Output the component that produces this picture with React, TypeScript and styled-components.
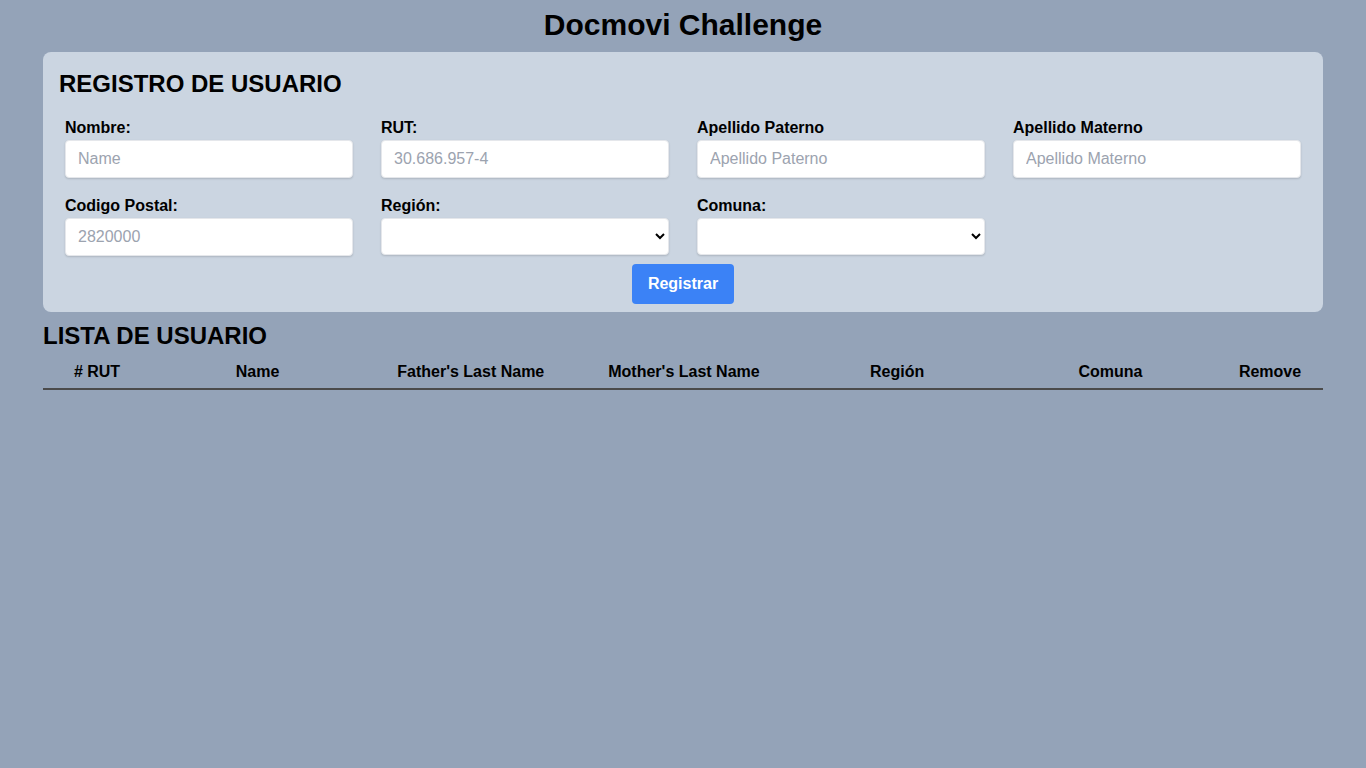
import styled, { createGlobalStyle } from "styled-components";

const GlobalStyle = createGlobalStyle`
  html, body {
    margin: 0;
    padding: 0;
    background-color: #94a3b8;
    font-family: "Liberation Sans", Arial, sans-serif;
    color: #000;
  }
  * {
    box-sizing: border-box;
  }
`;

const columns = [
  { label: "# RUT", width: "108px" },
  { label: "Name" },
  { label: "Father's Last Name" },
  { label: "Mother's Last Name" },
  { label: "Región" },
  { label: "Comuna" },
  { label: "Remove", width: "106px" },
];

export default function App() {
  return (
    <>
      <GlobalStyle />
      <Page>
        <Title>Docmovi Challenge</Title>
        <Card>
          <CardHeading>REGISTRO DE USUARIO</CardHeading>
          <FormGrid>
            <Field>
              <Label>Nombre:</Label>
              <Input placeholder="Name" />
            </Field>
            <Field>
              <Label>RUT:</Label>
              <Input placeholder="30.686.957-4" />
            </Field>
            <Field>
              <Label>Apellido Paterno</Label>
              <Input placeholder="Apellido Paterno" />
            </Field>
            <Field>
              <Label>Apellido Materno</Label>
              <Input placeholder="Apellido Materno" />
            </Field>
            <Field>
              <Label>Codigo Postal:</Label>
              <Input placeholder="2820000" />
            </Field>
            <Field>
              <Label>Región:</Label>
              <Select>
                <option value=""></option>
              </Select>
            </Field>
            <Field>
              <Label>Comuna:</Label>
              <Select>
                <option value=""></option>
              </Select>
            </Field>
          </FormGrid>
          <Actions>
            <Button type="button">Registrar</Button>
          </Actions>
        </Card>
        <ListHeading>LISTA DE USUARIO</ListHeading>
        <Table>
          <thead>
            <tr>
              {columns.map((c) => (
                <Th key={c.label} $width={c.width}>
                  {c.label}
                </Th>
              ))}
            </tr>
          </thead>
          <tbody></tbody>
        </Table>
      </Page>
    </>
  );
}

const Page = styled.div`
  width: 1280px;
  margin: 0 auto;
  padding-top: 7px;
`;

const Title = styled.h1`
  margin: 0 0 9px;
  font-size: 30px;
  line-height: 36px;
  font-weight: 700;
  text-align: center;
`;

const Card = styled.section`
  background-color: #cbd5e1;
  border-radius: 8px;
  padding: 16px 16px 8px;
`;

const CardHeading = styled.h2`
  margin: 0 0 16px;
  font-size: 24px;
  line-height: 32px;
  font-weight: 700;
`;

const FormGrid = styled.div`
  display: grid;
  grid-template-columns: repeat(4, 288px);
  column-gap: 28px;
  row-gap: 16px;
  padding: 0 6px;
`;

const Field = styled.div`
  display: flex;
  flex-direction: column;
`;

const Label = styled.label`
  font-size: 16px;
  line-height: 24px;
  font-weight: 700;
`;

const Input = styled.input`
  height: 38px;
  width: 100%;
  padding: 0 12px;
  font-family: inherit;
  font-size: 16px;
  color: #111;
  background: #fff;
  border: 1px solid #e5e7eb;
  border-radius: 4px;
  box-shadow: 0 1px 2px rgba(0, 0, 0, 0.15);
  outline: none;

  &::placeholder {
    color: #9ca3af;
  }
`;

const Select = styled.select`
  height: 37px;
  width: 100%;
  padding: 0 8px;
  font-family: inherit;
  font-size: 16px;
  background: #fff;
  border: 1px solid #e5e7eb;
  border-radius: 4px;
  box-shadow: 0 1px 2px rgba(0, 0, 0, 0.15);
  outline: none;
`;

const Actions = styled.div`
  display: flex;
  justify-content: center;
  margin-top: 8px;
`;

const Button = styled.button`
  height: 40px;
  padding: 0 16px;
  border: none;
  border-radius: 4px;
  background-color: #3b82f6;
  color: #fff;
  font-family: inherit;
  font-size: 16px;
  font-weight: 700;
  cursor: pointer;
`;

const ListHeading = styled.h2`
  margin: 8px 0 0;
  font-size: 24px;
  line-height: 32px;
  font-weight: 700;
`;

const Table = styled.table`
  width: 100%;
  table-layout: fixed;
  border-collapse: collapse;
`;

const Th = styled.th<{ $width?: string }>`
  width: ${(p) => p.$width ?? "auto"};
  padding: 8px 0 4px;
  font-size: 16px;
  line-height: 24px;
  font-weight: 700;
  text-align: center;
  border-bottom: 2px solid #4b4b4b;
`;
